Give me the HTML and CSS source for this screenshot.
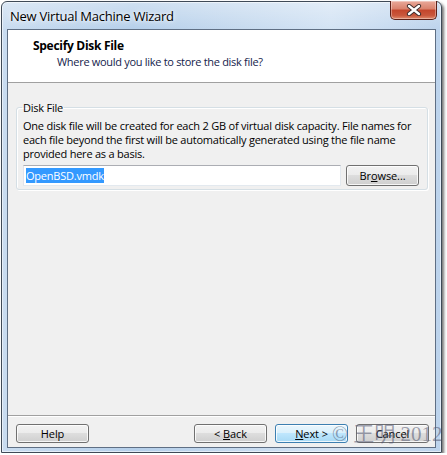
FILE: index.html
```html
<!DOCTYPE html>
<html lang="en">
<head>
<meta charset="utf-8">
<title>New Virtual Machine Wizard</title>
<link rel="stylesheet" href="styles.css">
</head>
<body>
<div class="window">
  <div class="titlebar">
    <span class="title">New Virtual Machine Wizard</span>
    <div class="close">
      <svg width="16" height="12" viewBox="0 0 16 12" aria-hidden="true">
        <path d="M3 2 L13 10 M13 2 L3 10" stroke="#3a2a2a" stroke-width="4.2" stroke-linecap="round"/>
        <path d="M3 2 L13 10 M13 2 L3 10" stroke="#ffffff" stroke-width="2.4" stroke-linecap="round"/>
      </svg>
    </div>
  </div>
  <div class="client">
    <div class="header">
      <div class="h-title">Specify Disk File</div>
      <div class="h-sub">Where would you like to store the disk file?</div>
    </div>
    <div class="body">
      <fieldset class="group">
        <legend>Disk File</legend>
        <p class="desc">One disk file will be created for each 2 GB of virtual disk capacity. File names for each file beyond the first will be automatically generated using the file name provided here as a basis.</p>
        <div class="row">
          <div class="input"><span class="sel">OpenBSD.vmdk</span></div>
          <button class="btn">Br<u>o</u>wse...</button>
        </div>
      </fieldset>
    </div>
    <div class="footer">
      <button class="btn">Help</button>
      <span class="spacer"></span>
      <button class="btn">&lt; <u>B</u>ack</button>
      <button class="btn default"><u>N</u>ext &gt;</button>
      <button class="btn">Cancel</button>
    </div>
  </div>
  <div class="watermark">© 王明 2012</div>
</div>
</body>
</html>
```

FILE: styles.css
```css
html, body {
  margin: 0;
  padding: 0;
  background: #ffffff;
}
body {
  padding: 1px 0 0 1px;
  font-family: "Open Sans", "Noto Sans", sans-serif;
  font-size: 11px;
  letter-spacing: -0.22px;
  color: #000;
}
.window {
  position: relative;
  box-sizing: border-box;
  width: 441px;
  height: 452px;
  border: 1px solid #3f4a57;
  border-radius: 6px 6px 0 0;
  padding: 0 5px 4px 5px;
  display: flex;
  flex-direction: column;
  background:
    linear-gradient(to bottom, rgba(255,255,255,0.35), rgba(255,255,255,0) 28px),
    linear-gradient(to right, #c9dcf0 0%, #b5cfea 30%, #c6daef 55%, #d3e3f4 75%, #bcd3ec 100%);
  box-shadow: 2px 2px 3px rgba(0,0,0,0.55), inset 0 0 0 1px rgba(255,255,255,0.55);
}
.titlebar {
  height: 27px;
  display: flex;
  align-items: flex-start;
  justify-content: space-between;
  flex: none;
}
.title {
  font-size: 13px;
  letter-spacing: -0.25px;
  padding: 5px 0 0 3px;
  color: #000;
  text-shadow: 0 0 6px rgba(255,255,255,0.9), 0 0 3px rgba(255,255,255,0.9);
}
.close {
  box-sizing: border-box;
  width: 47px;
  height: 19px;
  margin: -1px -1px 0 0;
  border: 1px solid #5b2018;
  border-top: none;
  border-radius: 0 0 5px 5px;
  background: linear-gradient(to bottom, #e9a99a 0%, #d9816c 45%, #c3452b 50%, #c9573c 80%, #e08a6c 100%);
  box-shadow: inset 0 0 0 1px rgba(255,255,255,0.35);
  display: flex;
  align-items: center;
  justify-content: center;
}
.client {
  flex: 1;
  display: flex;
  flex-direction: column;
  border: 1px solid #5f6f84;
  background: #f0f0f0;
  min-height: 0;
}
.header {
  flex: none;
  height: 52px;
  background: #ffffff;
  border-bottom: 1px solid #a0a0a0;
  box-sizing: content-box;
}
.h-title {
  font-weight: 700;
  font-size: 12px;
  letter-spacing: -0.3px;
  padding: 8px 0 0 25px;
  line-height: 16px;
}
.h-sub {
  padding: 0 0 0 49px;
  line-height: 16px;
  letter-spacing: -0.3px;
  color: #141c4c;
}
.body {
  flex: 1;
  padding: 17px 7px 0 8px;
  border-bottom: 1px solid #a0a0a0;
  box-shadow: 0 1px 0 #ffffff;
}
.group {
  margin: 0;
  padding: 0 8px 3px 6px;
  border: 1px solid #d5dfe5;
  border-radius: 3px;
  box-shadow: inset 1px 1px 0 #ffffff, 1px 1px 0 #ffffff;
  min-width: 0;
}
.group legend {
  padding: 0 1px;
  margin-left: -1px;
  line-height: 15px;
}
.desc {
  margin: 4px 0 4px 0;
  line-height: 14px;
}
.row {
  display: flex;
  gap: 5px;
  align-items: flex-start;
}
.input {
  box-sizing: border-box;
  width: 318px;
  height: 21px;
  background: #ffffff;
  border: 1px solid #e3e9ef;
  border-top-color: #abadb3;
  border-left-color: #e2e3ea;
  padding: 2px 0 0 2px;
  line-height: 15px;
}
.sel {
  background: #3399ff;
  color: #ffffff;
}
.btn {
  box-sizing: border-box;
  width: 73px;
  height: 21px;
  padding: 0;
  font-family: inherit;
  font-size: 11px;
  letter-spacing: -0.1px;
  color: #000;
  border: 1px solid #707070;
  border-radius: 3px;
  background: linear-gradient(to bottom, #f2f2f2 0%, #ebebeb 50%, #dddddd 50%, #cfcfcf 100%);
  box-shadow: inset 0 0 0 1px rgba(255,255,255,0.8);
}
.btn u {
  text-decoration: underline;
}
.btn.default {
  border-color: #3c7fb1;
  background: linear-gradient(to bottom, #eaf6fd 0%, #d9f0fc 50%, #bee6fd 50%, #a7d9f5 100%);
  box-shadow: inset 0 0 0 1px rgba(255,255,255,0.8);
}
.footer {
  flex: none;
  height: 23px;
  display: flex;
  gap: 8px;
  padding: 8px 6px 0 8px;
}
.footer .btn {
  height: 19px;
  line-height: 15px;
}
.spacer {
  flex: 1;
}
.watermark {
  position: absolute;
  left: 330px;
  top: 420px;
  font-family: "Liberation Serif", "Noto Sans CJK SC", serif;
  font-size: 21px;
  letter-spacing: 0;
  line-height: 24px;
  color: rgba(80, 84, 110, 0.55);
  white-space: nowrap;
  pointer-events: none;
}
```
